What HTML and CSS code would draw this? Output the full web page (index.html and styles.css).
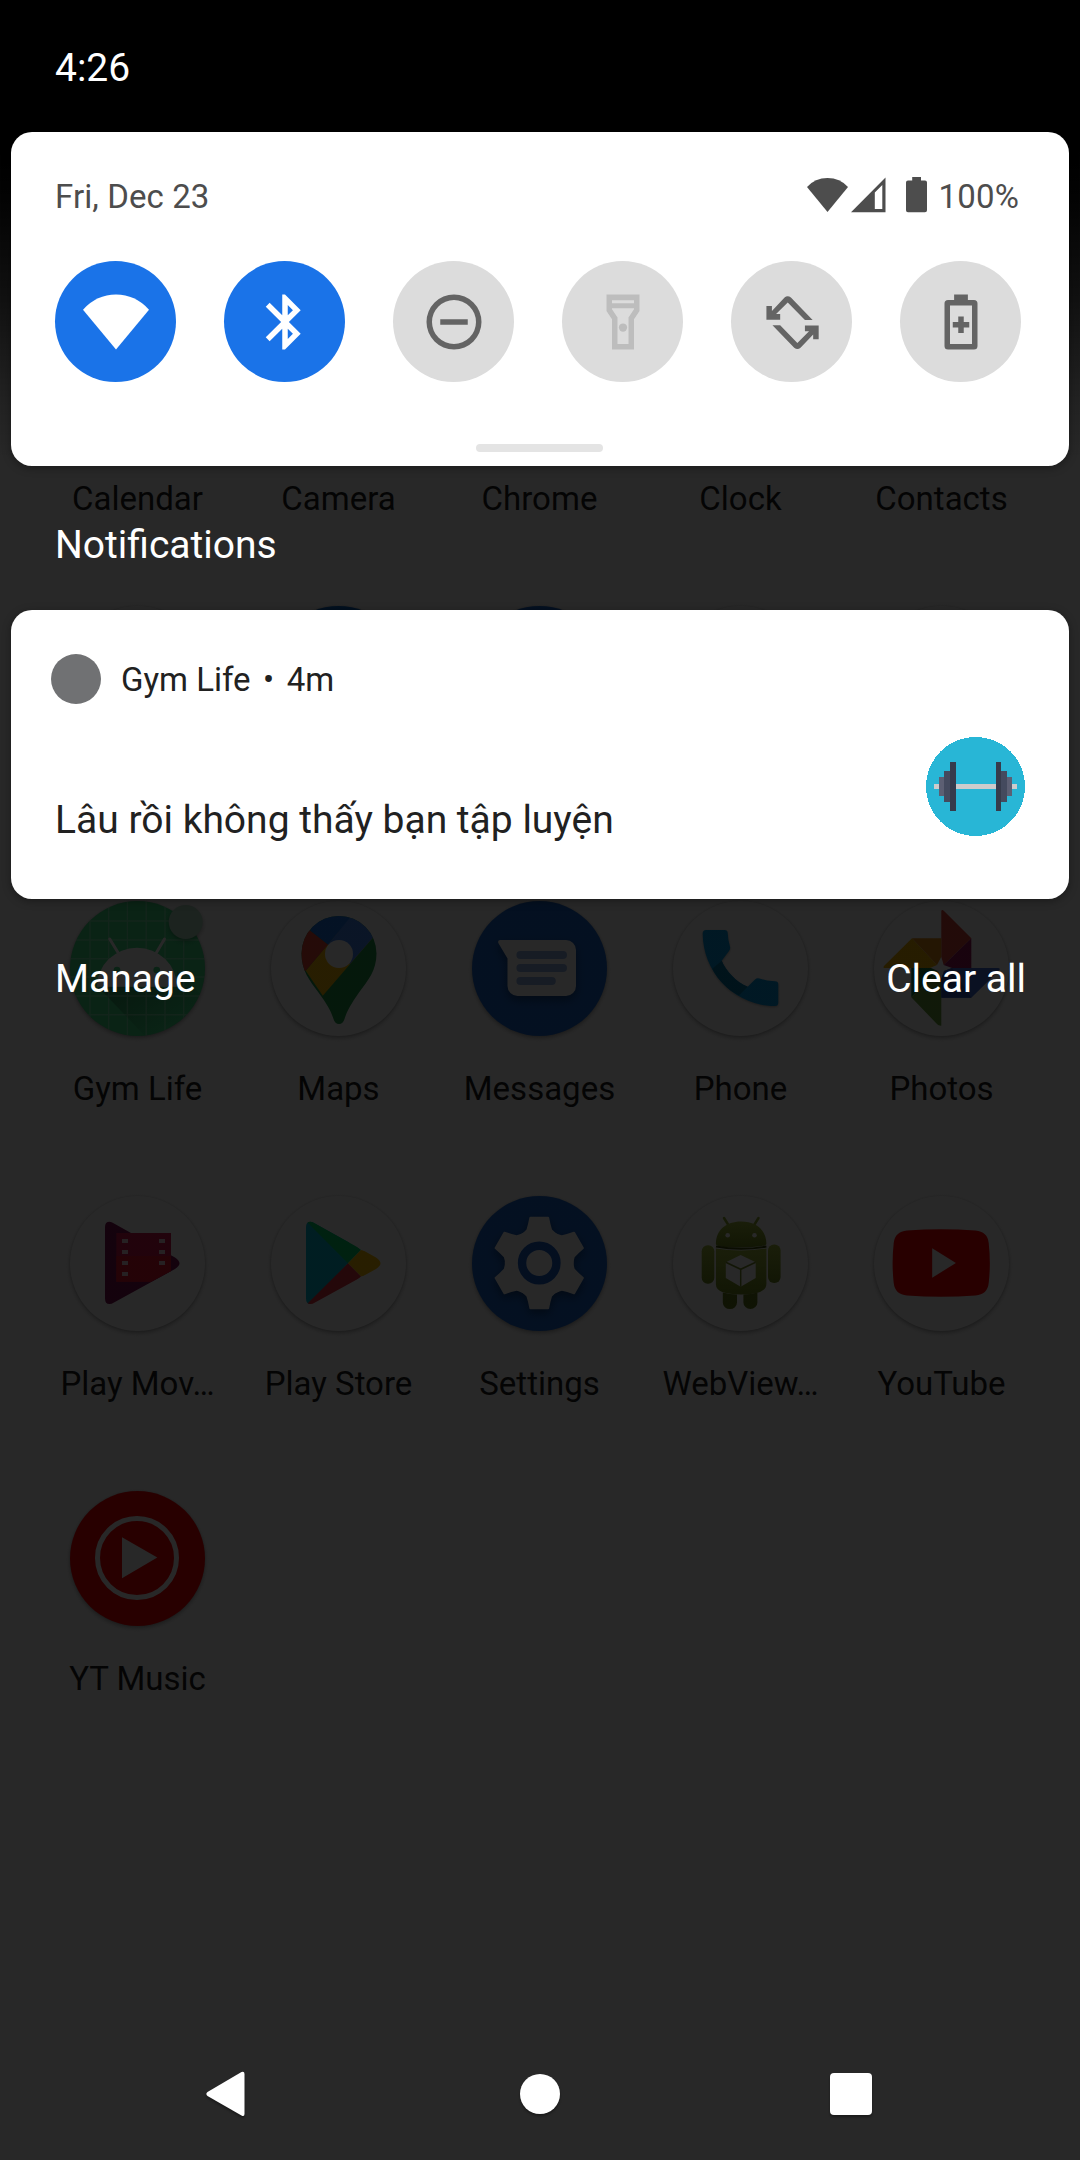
FILE: index.html
```html
<!DOCTYPE html>
<html lang="en">
<head>
<meta charset="utf-8">
<title>Notification shade</title>
<link rel="stylesheet" href="styles.css">
</head>
<body>
<div class="screen">
  <main class="launcher">
    <div class="app"><span class="icon white"></span><span class="label">Calendar</span></div>
    <div class="app"><span class="icon white"></span><span class="label">Camera</span></div>
    <div class="app"><span class="icon white"></span><span class="label">Chrome</span></div>
    <div class="app"><span class="icon white"></span><span class="label">Clock</span></div>
    <div class="app"><span class="icon white"></span><span class="label">Contacts</span></div>

    <div class="app"><span class="icon white"></span></div>
    <div class="app"><span class="icon azure"></span></div>
    <div class="app"><span class="icon blue"></span></div>
    <div class="app"><span class="icon white"></span></div>
    <div class="app"><span class="icon white"></span></div>

    <div class="app">
      <span class="icon green">
        <svg viewBox="0 0 135 135">
          <defs>
            <clipPath id="disc"><circle cx="67.500" cy="67.500" r="67.500"/></clipPath>
            <linearGradient id="cast" x1="0" y1="0" x2="1" y2="1"><stop offset="0" stop-opacity=".4"/><stop offset=".75" stop-opacity="0"/></linearGradient>
          </defs>
          <g clip-path="url(#disc)">
            <path d="M28 85.700L75 135H135V98L107 70V85.700Z" fill="url(#cast)"/>
            <path d="M20 0V135M38.700 0V135M57.400 0V135M76.200 0V135M95 0V135M113.700 0V135M0 20H135M0 39H135M0 57.700H135M0 76H135M0 95H135M0 113.700H135" stroke="#fff" stroke-opacity=".3" stroke-width="1.400"/>
            <path d="M39.700 38L48 51.500M94.500 38L86.500 51.500" stroke="#fff" stroke-width="3" stroke-linecap="round"/>
            <path d="M27 85.700a40 39 0 0 1 80 0Z" fill="#fff"/>
            <circle cx="47" cy="69" r="3.300" fill="#3ddc84"/><circle cx="86.700" cy="69" r="3.300" fill="#3ddc84"/>
          </g>
          <circle class="badge" cx="115.700" cy="21" r="17" fill="#b2dcc4"/>
        </svg>
      </span>
      <span class="label">Gym Life</span>
    </div>
    <div class="app">
      <span class="icon white">
        <svg viewBox="0 0 135 135">
          <defs><clipPath id="pin"><path d="M68 15a37.500 37.500 0 0 1 37.500 37.500c0 17-8.500 27-17.500 39C80 103 76 110 73.500 118Q72 123 68 123T62.500 118C60 110 56 103 47.500 91.500C38.500 79.500 30.500 69.500 30.500 52.500A37.500 37.500 0 0 1 68 15Z"/></clipPath></defs>
          <g clip-path="url(#pin)">
            <path d="M0 0H135V135H0Z" fill="#1e9648"/>
            <path d="M102 36.500L51.800 94.700L34.700 69.700L68 30Z" fill="#fbbc04"/>
            <path d="M39.500 29.700L57 43.500L34.700 69.700L20 70V20Z" fill="#ea4335"/>
            <path d="M39.500 29.700L57 43.500L79.500 17V5H40Z" fill="#1a73e8"/>
            <path d="M79.500 16L57 43.500L79 63L102.500 36L110 10Z" fill="#4285f4"/>
          </g>
          <circle cx="68" cy="53" r="14" fill="#fff"/>
        </svg>
      </span>
      <span class="label">Maps</span>
    </div>
    <div class="app">
      <span class="icon blue">
        <svg viewBox="0 0 135 135">
          <path class="lifted" d="M28 39H94a10 10 0 0 1 10 10V85a10 10 0 0 1-10 10H45.500a10 10 0 0 1-10-10V57.500L26.300 42Q25.500 39 28 39Z" fill="#fff"/>
          <path d="M48.400 54H91M48.400 67H91M48.400 80H79.800" stroke="#92b1e6" stroke-width="8" stroke-linecap="round"/>
        </svg>
      </span>
      <span class="label">Messages</span>
    </div>
    <div class="app">
      <span class="icon white">
        <svg viewBox="0 0 135 135">
          <g class="soft">
            <path d="M33 29H51.500Q54.700 29 54.700 32Q55 39 57 45.500Q57.700 48 56 50L48.700 59.700C53 70 63 81 74.700 85.700L82 78.500Q84 76.500 86.500 77.500Q94 80 102 80.300Q105.300 80.300 105.300 83.500V101.500Q105.300 105 102 105C62 105 29.700 72 29.700 32.500Q29.700 29 33 29Z" fill="#039be5"/>
            <path d="M48.700 59.700C53 70 63 81 74.700 85.700L66 94.500C55 89 45 79 39.300 67.700Z" fill="#0277a8"/>
          </g>
        </svg>
      </span>
      <span class="label">Phone</span>
    </div>
    <div class="app">
      <span class="icon white">
        <svg viewBox="0 0 135 135">
          <path d="M67.300 10Q68 8 70 10L97.300 37.300L69.700 64L67.300 55.700Z" fill="#db4437"/>
          <path d="M97.300 37.300V67H78L69.700 64Z" fill="#9c1458"/>
          <path d="M38 37.300L63 64L56 67H11Q8.500 67 10 65Z" fill="#f4b400"/>
          <path d="M38 37.300H67.300V55.700L63 64Z" fill="#e58a10"/>
          <path d="M37.300 67H57L64 70L37.300 96.300Z" fill="#0f7c42"/>
          <path d="M37.300 96.300L64 70L67.300 78V124.700Q64 125 62 122Z" fill="#689f38"/>
          <path d="M78 67H124Q127 67 125 69.500L97.300 96.700H67.300V78L70 70Z" fill="#3f6bd8"/>
          <path d="M67.300 78L70 70L78 67L97.300 96.700H67.300Z" fill="#2a4faa"/>
        </svg>
      </span>
      <span class="label">Photos</span>
    </div>

    <div class="app">
      <span class="icon white">
        <svg viewBox="0 0 135 135">
          <defs><clipPath id="play"><path d="M35 31Q35 25.700 39.500 25.700Q41.500 25.700 44 27.500L105 61.500Q109.500 64.500 109.500 67.300T105 73L44 106.500Q41.500 108 39.500 108Q35 108 35 102.500Z"/></clipPath></defs>
          <g clip-path="url(#play)"><path d="M35 20H112V112H35Z" fill="#7d0f52"/></g>
          <path d="M46.300 37H101V75L81 85.700H46.300Z" fill="#d5124a"/>
          <path d="M46.300 60H101V75L81 85.700H46.300Z" fill="#e8112d"/>
          <path d="M52 43h6v4h-6ZM52 54h6v4h-6ZM52 65h6v4h-6ZM52 76h6v4h-6ZM89 43h6v4h-6ZM89 54h6v4h-6ZM89 65h6v4h-6Z" fill="#f3d0dc"/>
        </svg>
      </span>
      <span class="label">Play Mov…</span>
    </div>
    <div class="app">
      <span class="icon white">
        <svg viewBox="0 0 135 135">
          <g clip-path="url(#play)">
            <path d="M30 20H80L77 67.300L36 112H30Z" fill="#00bcd8"/>
            <path d="M35 25L77 67.300L90 54L50 20Z" fill="#00d068"/>
            <path d="M90 54L77 67.300L90 80.500L115 75V60Z" fill="#fcc000"/>
            <path d="M77 67.300L90 80.500L50 115L35 109Z" fill="#e6303f"/>
          </g>
        </svg>
      </span>
      <span class="label">Play Store</span>
    </div>
    <div class="app">
      <span class="icon blue">
        <svg viewBox="0 0 135 135">
          <defs><path id="tooth" d="M54.500 33.500Q56 29 57.400 21.500Q57.600 20.700 58.500 20.700H76Q76.900 20.700 77.100 21.500Q78.500 29 80 33.500L90 43H45Z"/></defs>
          <g class="lifted" fill="#fff">
            <use href="#tooth"/>
            <use href="#tooth" transform="rotate(60 67.250 67)"/>
            <use href="#tooth" transform="rotate(120 67.250 67)"/>
            <use href="#tooth" transform="rotate(180 67.250 67)"/>
            <use href="#tooth" transform="rotate(240 67.250 67)"/>
            <use href="#tooth" transform="rotate(300 67.250 67)"/>
            <circle cx="67.250" cy="67" r="34.500"/>
          </g>
          <circle cx="67.250" cy="67" r="17.200" fill="none" stroke="#1a5fc8" stroke-width="8.400"/>
        </svg>
      </span>
      <span class="label">Settings</span>
    </div>
    <div class="app">
      <span class="icon white">
        <svg viewBox="0 0 135 135">
          <defs><linearGradient id="droid" x1="0" y1="0" x2="0" y2="1"><stop offset="0" stop-color="#a4bd3c"/><stop offset="1" stop-color="#6f8a1c"/></linearGradient></defs>
          <path d="M51 22L56 30M85.500 22L80.500 30" stroke="#8fa82f" stroke-width="2.500" stroke-linecap="round"/>
          <g fill="url(#droid)">
            <path d="M42.900 48C43 34 53 25.500 68 25.500S93.400 34 93.400 48Q93.400 51 68 51.500T42.900 48Z"/>
            <path d="M42.900 52.500Q68 56.500 93.400 52.500V88Q93.400 98.500 68 98.500T42.900 88Z"/>
            <rect x="28.700" y="49.300" width="12.600" height="38.400" rx="6"/>
            <rect x="95" y="48.500" width="12.600" height="38.400" rx="6"/>
          </g>
          <path d="M49.800 96.500Q57 98.500 64 98.500V106.500a7 6.500 0 0 1-14.200 0ZM70.400 98.500Q78 98.500 84.400 96.500V106.500a7 6.500 0 0 1-14 0Z" fill="#627a18"/>
          <path d="M43 50.500Q68 55 93.400 50.500" stroke="#3c4c08" stroke-width="2" fill="none"/>
          <circle cx="54.700" cy="39.300" r="2.300" fill="#fff"/><circle cx="81.500" cy="39.300" r="2.300" fill="#fff"/>
          <path d="M67.700 59L82.700 66.300V82L67.700 90.700L52.800 82V66.300Z" fill="#fff"/>
          <path d="M52.800 66.300L67.700 73.300L82.700 66.300M67.700 73.300V90.700" stroke="#758c28" stroke-width="1.500" fill="none"/>
        </svg>
      </span>
      <span class="label">WebView…</span>
    </div>
    <div class="app">
      <span class="icon white">
        <svg viewBox="0 0 135 135">
          <path d="M33 34.500Q67 32 101.500 34.500Q113.500 35.500 114.700 47Q117 67 114.700 87Q113.500 98.500 101.500 99.500Q67 102 33 99.500Q21 98.500 19.700 87Q17.500 67 19.700 47Q21 35.500 33 34.500Z" fill="#f00"/>
          <path d="M58.200 52.300L81.900 67L58.200 81.700Z" fill="#fff"/>
        </svg>
      </span>
      <span class="label">YouTube</span>
    </div>

    <div class="app">
      <span class="icon red">
        <svg viewBox="0 0 135 135">
          <circle cx="67" cy="67" r="39.500" fill="none" stroke="#fff" stroke-width="5"/>
          <path d="M52 46.300L87.300 66.500L52 87.300Z" fill="#fff"/>
        </svg>
      </span>
      <span class="label">YT Music</span>
    </div>
  </main>

  <div class="scrim"></div>

  <div class="shade">
    <header class="status-bar"><span class="clock">4:26</span></header>

    <section class="quick-settings">
      <div class="info">
        <span class="date">Fri, Dec 23</span>
        <span class="system">
          <svg class="wifi" viewBox="0 0 41 36"><path d="M20.500 35L0 10Q8 1 20.500 1T41 10Z"/></svg>
          <svg class="signal" viewBox="0 0 35 36"><path fill-rule="evenodd" d="M34.500 .5V35.300H0ZM31.300 8L23.800 15.500V32H31.300Z"/></svg>
          <svg class="battery" viewBox="0 0 21 36"><path d="M6.200 0H15V3.500H19Q21 3.500 21 5.500V33.300Q21 35.300 19 35.300H2Q0 35.300 0 33.300V5.500Q0 3.500 2 3.500H6.200Z"/></svg>
          <span class="percent">100%</span>
        </span>
      </div>
      <div class="tiles">
        <span class="tile on"><svg viewBox="0 0 24 24"><path d="M12 22L0 7.500Q5 2 12 2T24 7.500Z"/></svg></span>
        <span class="tile on"><svg viewBox="0 0 24 24"><path d="M17.710 7.710L12 2h-1v7.590L6.410 5 5 6.410 10.590 12 5 17.590 6.410 19 11 14.410V22h1l5.710-5.710-4.300-4.290 4.300-4.290zM13 5.830l1.880 1.880L13 9.590V5.830zm1.880 10.460L13 18.170v-3.760l1.880 1.880z"/></svg></span>
        <span class="tile"><svg viewBox="0 0 24 24"><path fill-rule="evenodd" d="M12 2a10 10 0 1 0 0 20a10 10 0 0 0 0-20zM12 4a8 8 0 1 1 0 16a8 8 0 0 1 0-16zM7 11h10v2H7z"/></svg></span>
        <span class="tile disabled"><svg viewBox="0 0 24 24"><path fill-rule="evenodd" d="M6 2H18V8L16 11V22H8V11L6 8ZM8 4.100V5.200H16V4.100ZM8 7V7.400L10 10.400V20H14V10.400L16 7.400V7Z"/><circle cx="12" cy="14" r="1.500"/></svg></span>
        <span class="tile"><svg viewBox="0 0 24 24"><path id="turn" d="M2.700 6.200H4.700V8L9.300 3.100Q10.400 2.200 11.600 3.100L19.500 11.300H16.700L10.450 4.900L6.200 9.100H7.700V11.200H2.700Z"/><use href="#turn" transform="rotate(180 12.200 12.250)"/></svg></span>
        <span class="tile"><svg viewBox="0 0 24 24"><path fill-rule="evenodd" d="M9.500 2H14.500V4H16.700Q18 4 18 5.300V20.700Q18 22 16.700 22H7.300Q6 22 6 20.700V5.300Q6 4 7.300 4H9.500ZM8 6V20H16V6ZM11 10H13V12H15V14H13V16H11V14H9V12H11Z"/></svg></span>
      </div>
      <span class="handle"></span>
    </section>

    <h2 class="heading">Notifications</h2>

    <article class="notification">
      <div class="source"><span class="small-icon"></span><span>Gym Life</span><span class="dot">•</span><span>4m</span></div>
      <div class="content">
        <p class="message">Lâu rồi không thấy bạn tập luyện</p>
        <svg class="large-icon" viewBox="0 0 99 99" shape-rendering="crispEdges">
          <circle cx="49.500" cy="49.500" r="49.500" fill="#28b6d6"/>
          <path d="M8 47H91V52H8Z" fill="#ccc"/>
          <path d="M13 40H18V59H13ZM81 40H86V59H81Z" fill="#5c5f73"/>
          <path d="M18 34H24V65H18ZM75 34H81V65H75Z" fill="#444a5e"/>
          <path d="M24 25H30V74H24ZM70 25H75V74H70Z" fill="#363b4b"/>
        </svg>
      </div>
    </article>

    <div class="actions"><span>Manage</span><span>Clear all</span></div>

    <nav class="nav-bar">
      <svg class="back" viewBox="0 0 39 46"><path d="M38.500 3V43Q38.500 46 35.500 44.500L1.500 25Q-.8 23 1.500 21L35.500 1Q38.500 0 38.500 3Z"/></svg>
      <svg class="home" viewBox="0 0 40 40"><circle cx="20" cy="20" r="20"/></svg>
      <svg class="recents" viewBox="0 0 42 42"><rect width="42" height="42" rx="4"/></svg>
    </nav>
  </div>
</div>
</body>
</html>
```
FILE: styles.css
```css
* { box-sizing: border-box; }

body {
  margin: 0;
  font-family: Roboto, sans-serif;
}

svg { display: block; }

/* Launcher, scrim and shade are stacked in one grid cell. */
.screen {
  display: grid;
  width: 1080px;
  height: 2160px;
  overflow: hidden;
  background: #fff;
}

.launcher,
.scrim,
.shade { grid-area: 1 / 1; }

/* App drawer */
.launcher {
  display: grid;
  grid-template-columns: repeat(5, 201px);
  grid-auto-rows: 295px;
  align-content: start;
  padding: 311px 37px 0;
}

.app {
  display: flex;
  flex-direction: column;
  align-items: center;
  gap: 33px;
}

.icon {
  width: 135px;
  height: 135px;
  border-radius: 50%;
  box-shadow: 0 2px 4px rgba(0, 0, 0, .32), 0 0 2px rgba(0, 0, 0, .12);
}

.icon svg { width: 135px; height: 135px; overflow: visible; }
.white { background: #fff; }
.blue { background: #1967d2; }
.azure { background: #0b66c8; }
.green { background: #3ddc84; }
.red { background: #f00; }
.badge { filter: drop-shadow(0 2px 2px rgba(0, 0, 0, .3)); }
.lifted { filter: drop-shadow(0 4px 5px rgba(0, 0, 0, .4)); }
.soft { filter: drop-shadow(0 1px 1px rgba(0, 0, 0, .3)); }

.label {
  color: #1b1b1b;
  font-size: 33px;
  line-height: 40px;
  white-space: nowrap;
}

.scrim {
  background: linear-gradient(#000 150px, rgba(0, 0, 0, .985) 200px, rgba(0, 0, 0, .933) 300px, rgba(0, 0, 0, .867) 400px, rgba(0, 0, 0, .843) 460px);
}

/* Notification shade */
.shade {
  display: flex;
  flex-direction: column;
  color: #fff;
}

.status-bar {
  height: 132px;
  padding: 44px 55px 0;
  font-size: 39px;
  line-height: 48px;
}

.quick-settings,
.notification {
  margin: 0 11px;
  border-radius: 21px;
  background: #fff;
  box-shadow: 0 2px 8px rgba(0, 0, 0, .35);
}

.quick-settings {
  display: flex;
  flex-direction: column;
  height: 334px;
  padding: 43px 44px 0;
}

.info {
  display: flex;
  justify-content: space-between;
  height: 40px;
  color: #4d4d4d;
  font-size: 33px;
  line-height: 44px;
}

.date { letter-spacing: .1px; }

.system {
  display: flex;
  padding: 2px 6px 0 0;
  fill: #4d4d4d;
}

.wifi { width: 41px; height: 36px; margin-right: 3px; }
.signal { width: 35px; height: 36px; margin-right: 20px; }
.battery { width: 21px; height: 36px; margin-right: 11px; }
.percent { margin-top: -2px; letter-spacing: .2px; }

.tiles {
  display: flex;
  justify-content: space-between;
  width: 966px;
  margin-top: 46px;
}

.tile {
  display: grid;
  place-items: center;
  width: 121px;
  height: 121px;
  border-radius: 50%;
  background: #dcdcdc;
  fill: #646464;
}

.tile svg { width: 66px; height: 66px; }
.tile.on { background: #1a73e8; fill: #fff; }
.tile.disabled { fill: #bdbdbd; }

.handle {
  align-self: center;
  width: 127px;
  height: 8px;
  margin: 62px 1px 0 0;
  border-radius: 4px;
  background: #e4e4e4;
}

.heading {
  height: 144px;
  margin: 0;
  padding: 55px 55px 0;
  font-size: 39px;
  font-weight: 400;
  line-height: 48px;
}

.notification {
  height: 289px;
  padding: 44px 44px 0 40px;
  color: #212121;
}

.source {
  display: flex;
  height: 50px;
  font-size: 33px;
  line-height: 52px;
}

.small-icon {
  width: 50px;
  height: 50px;
  margin-right: 20px;
  border-radius: 50%;
  background: #707173;
}

.dot { margin: 0 12.5px; }

.content {
  display: flex;
  justify-content: space-between;
  padding: 33px 0 0 4px;
}

.message {
  margin: 59px 0 0;
  font-size: 39px;
  line-height: 48px;
}

.large-icon { width: 99px; height: 99px; }

.actions {
  display: flex;
  justify-content: space-between;
  padding: 56px 54px 0 55px;
  font-size: 39px;
  line-height: 48px;
}

.nav-bar {
  display: flex;
  align-items: center;
  justify-content: space-between;
  height: 132px;
  margin-top: auto;
  padding: 0 208px 0 206px;
  fill: #fff;
}

.nav-bar svg { filter: drop-shadow(0 2px 1px rgba(0, 0, 0, .35)); }
.back { width: 39px; height: 46px; }
.home { width: 40px; height: 40px; margin-left: 4px; }
.recents { width: 42px; height: 42px; }
```
